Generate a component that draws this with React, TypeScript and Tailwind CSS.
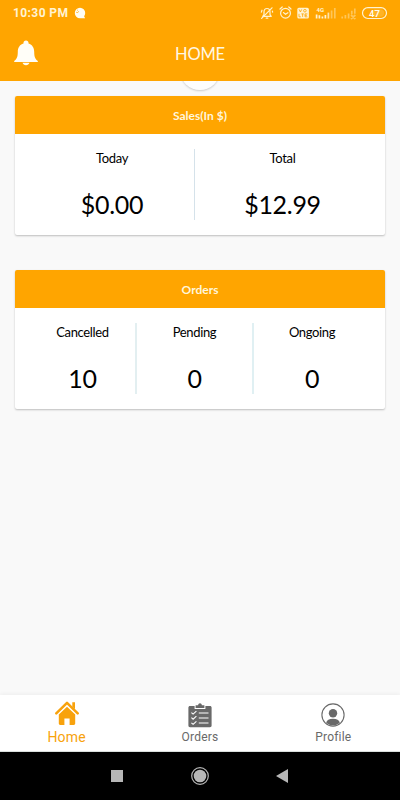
import React from "react";

const LATO = "font-['Lato','Noto_Sans',sans-serif]";
const ROBOTO = "font-['Roboto','Noto_Sans',sans-serif]";

function StatusIcons() {
  return (
    <svg width="130" height="16" viewBox="0 0 130 16" className="text-[#fff3d2]" fill="none" stroke="currentColor">
      {/* muted bell */}
      <g strokeWidth="1.2" strokeLinecap="round" strokeLinejoin="round">
        <path d="M2.8 11.4h8.4L10 9.6V7c0-2-1.2-3.5-3-3.5S4 5 4 7v2.6zM6.2 13.2h1.6" />
        <path d="M1.6 13.4 12 2.8M1.4 7.2l.6-2M12.6 7.2l-.2-1" />
      </g>
      {/* alarm clock */}
      <g strokeWidth="1.2" strokeLinecap="round">
        <circle cx="25.5" cy="8.2" r="4.9" />
        <path d="M23.4 7.6l2.1 1.6 2.4-1.5M20 4l2.2-2M31 4l-2.2-2" />
      </g>
      {/* VoLTE badge */}
      <rect x="37.3" y="2.8" width="11.6" height="10.8" rx="1.6" fill="currentColor" stroke="none" />
      <g stroke="#ffa500" strokeWidth=".8">
        <path d="M39.1 4.4l1.3 2.6 1.3-2.6" />
        <circle cx="44.9" cy="5.7" r="1.3" />
        <path d="M39 8.8v3h1.8M41.4 8.9h2.4M42.6 8.9v3M47.4 8.9H45v2.9h2.4M45 10.3h2" />
      </g>
      {/* first signal */}
      <text x="56.5" y="6.6" fontSize="6" fontWeight="700" fill="currentColor" stroke="none" className="font-['Roboto',sans-serif]">4G</text>
      <g strokeWidth="1.7">
        <path d="M56.6 9.6v4M59.4 10.2v3.4M62.4 11.4v2.2M65.4 10v3.6" />
        <path d="M68.4 7.6v6" opacity=".8" />
        <path d="M71.6 5.5v8.1M74.8 3v10.6" opacity=".42" />
      </g>
      {/* second signal, no service */}
      <g opacity=".42" strokeWidth="1.7">
        <path d="M82.2 11.6v2M85.4 10v3.6M88.6 8.4v5.2M91.8 5.8v3.4M94.8 3.4v5.4M91 10l4.4 4M95.4 10 91 14" />
      </g>
      {/* battery */}
      <rect x="102.5" y="2.7" width="24" height="10.8" rx="5.4" strokeWidth="1.2" />
      <path d="M114 4.4h6.5a3.7 3.7 0 0 1 0 7.4H114z" fill="currentColor" stroke="none" opacity=".18" />
      <text x="114.5" y="11.6" textAnchor="middle" fontSize="9.5" fontWeight="600" fill="#fffbee" stroke="none" className="font-['Roboto',sans-serif]">47</text>
    </svg>
  );
}

function Stat({ label, value, width }: { label: string; value: string; width: string }) {
  return (
    <div className={`${width} flex flex-col items-center`}>
      <span className="text-[13px] leading-[18px] tracking-[-0.35px]">{label}</span>
      <span className="mt-[21px] text-[25px] leading-[32px] tracking-[-0.3px]">{value}</span>
    </div>
  );
}

function Card({ title, children }: { title: string; children: React.ReactNode }) {
  return (
    <section className="h-[139px] overflow-hidden rounded-[2px] bg-white shadow-[0_1px_2px_rgba(0,0,0,0.24)]">
      <h2 className="flex h-[38px] items-center justify-center bg-[#ffa500] pt-px text-[12px] font-bold text-[#fff6dc]">{title}</h2>
      <div className="flex px-[15px] pt-[15px] text-black">{children}</div>
    </section>
  );
}

export default function App() {
  return (
    <div className={`flex h-[800px] w-[400px] flex-col overflow-hidden bg-[#f9f9f9] ${LATO}`}>
      <header className="h-[81px] shrink-0 bg-[#ffa500]">
        <div className="flex h-[25px] items-center justify-between pl-[13px] pr-[10px]">
          <div className="flex items-center gap-[6px]">
            <span className={`text-[12px] font-bold leading-[16px] tracking-[0.4px] text-[#fff3d2] ${ROBOTO}`}>10:30 PM</span>
            <svg width="12" height="12" viewBox="0 0 12 12">
              <path d="M6 .8A5.2 5.2 0 0 1 11.2 6c0 1.3-.4 2.3-1.1 3.2l1 2H6A5.2 5.2 0 1 1 6 .8z" fill="#fffdf3" />
              <path d="M2.2 5.2c.9.7 2.2.4 2.4-.8M3 3.2h.8" fill="none" stroke="#ffa500" strokeWidth=".8" />
            </svg>
          </div>
          <StatusIcons />
        </div>
        <div className="grid h-[56px] grid-cols-[1fr_100px_1fr] items-center">
          <svg width="24" height="26" viewBox="0 0 24 26" className="ml-[14px]" fill="#fffef8">
            <path d="M12 .4c1.6 0 2.5 1 2.5 2.3v.7c3.9 1.2 5.7 4.4 5.7 8.3 0 5.2 1 7.4 3.6 9.2v1.2H.2v-1.2c2.6-1.8 3.6-4 3.6-9.2 0-3.9 1.8-7.1 5.7-8.3v-.7C9.5 1.4 10.4.4 12 .4zM8.5 22.8h7c-.5 1.5-1.8 2.5-3.5 2.5s-3-1-3.5-2.5z" />
          </svg>
          <h1 className="pt-0.5 text-center text-[16.5px] leading-[22px] tracking-[-0.2px] text-[#fff8e5]">HOME</h1>
        </div>
      </header>
      <main className="flex min-h-0 flex-1 flex-col px-[15px]">
        <div className="flex h-[15px] shrink-0 items-end justify-center overflow-hidden pb-[6.5px]">
          <div className="size-[40px] shrink-0 rounded-full bg-[#fdfdfd] shadow-[0_1px_2px_rgba(0,0,0,0.18)]" />
        </div>
        <Card title="Sales(In $)">
          <Stat label="Today" value="$0.00" width="w-[164px]" />
          <div className="h-[71px] w-px bg-[#d5e2ea]" />
          <Stat label="Total" value="$12.99" width="w-[175px]" />
        </Card>
        <div className="h-[35px] shrink-0" />
        <Card title="Orders">
          <Stat label="Cancelled" value="10" width="w-[105px]" />
          <div className="h-[71px] w-[2px] bg-[#e3eff1]" />
          <Stat label="Pending" value="0" width="w-[115px]" />
          <div className="h-[71px] w-[2px] bg-[#e0f0f3]" />
          <Stat label="Ongoing" value="0" width="w-[116px]" />
        </Card>
      </main>
      <nav className={`grid h-[57px] shrink-0 grid-cols-3 border-b border-[#d9dfdd] bg-white text-[#696969] shadow-[0_-1px_4px_rgba(0,0,0,0.05)] ${ROBOTO}`}>
        <div className="flex flex-col items-center pt-[6px] text-[#f8a20c]">
          <svg width="24" height="24" viewBox="0 0 24 24">
            <path d="M1.3 12.3 12 1.8l10.7 10.5" fill="none" stroke="currentColor" strokeWidth="2.5" strokeLinecap="round" strokeLinejoin="round" />
            <path d="M17.3 1.3H20v7l-2.7-2.6zM12 5.7l8.2 7.9v9c0 .8-.6 1.4-1.4 1.4h-4.2v-6.5H9.4V24H5.2c-.8 0-1.4-.6-1.4-1.4v-9z" fill="currentColor" />
          </svg>
          <span className="mt-1 text-[14px] leading-[16px] tracking-[0.2px]">Home</span>
        </div>
        <div className="flex flex-col items-center pt-[8px]">
          <svg width="24" height="25" viewBox="0 0 24 25">
            <path d="M2 3h4.6v3h10.8V3H22c.9 0 1.6.7 1.6 1.6v18c0 .9-.7 1.6-1.6 1.6H2c-.9 0-1.6-.7-1.6-1.6v-18C.4 3.700 1.100 3 2 3z" fill="currentColor" />
            <path d="M7.600 5V2.200h2.500C10.400 1 11 .3 12 .3s1.600.7 1.900 1.900h2.500V5z" fill="currentColor" />
            <path d="m3.400 9.600 1.700 1.500 3.300-3M3.400 14.700l1.700 1.500 3.300-3M3.400 19.800l1.700 1.500 3.300-3M10.800 10h9.700M10.800 15h9.700M10.800 20h9.700" fill="none" stroke="#fff" strokeWidth="1.100" />
          </svg>
          <span className="mt-[2px] text-[12px] leading-[14px] tracking-[0.2px]">Orders</span>
        </div>
        <div className="flex flex-col items-center pt-[8px]">
          <svg width="24" height="24" viewBox="0 0 24 24">
            <circle cx="12" cy="12" r="11.1" fill="none" stroke="currentColor" strokeWidth="1.1" />
            <circle cx="12" cy="10.3" r="4.2" fill="currentColor" />
            <path d="M5.200 19.700c.5-2.400 3-4 6.800-4s6.300 1.600 6.800 4c-1.800 1.700-4.200 2.600-6.800 2.600s-5-.9-6.800-2.600z" fill="currentColor" />
          </svg>
          <span className="mt-[3px] text-[12px] leading-[14px] tracking-[0.2px]">Profile</span>
        </div>
      </nav>
      <div className="flex h-[48px] shrink-0 items-center justify-between bg-black pl-[111px] pr-[112px]">
        <div className="size-[12px] bg-[#b7b7b7]" />
        <svg width="18" height="18" viewBox="0 0 18 18" className="ml-[1px]">
          <circle cx="9" cy="9" r="8.3" fill="none" stroke="#b7b7b7" strokeWidth="1.2" />
          <circle cx="9" cy="9" r="6.3" fill="#b7b7b7" />
        </svg>
        <svg width="12" height="14" viewBox="0 0 12 14">
          <path d="M12 0v14L0 7z" fill="#b7b7b7" />
        </svg>
      </div>
    </div>
  );
}
